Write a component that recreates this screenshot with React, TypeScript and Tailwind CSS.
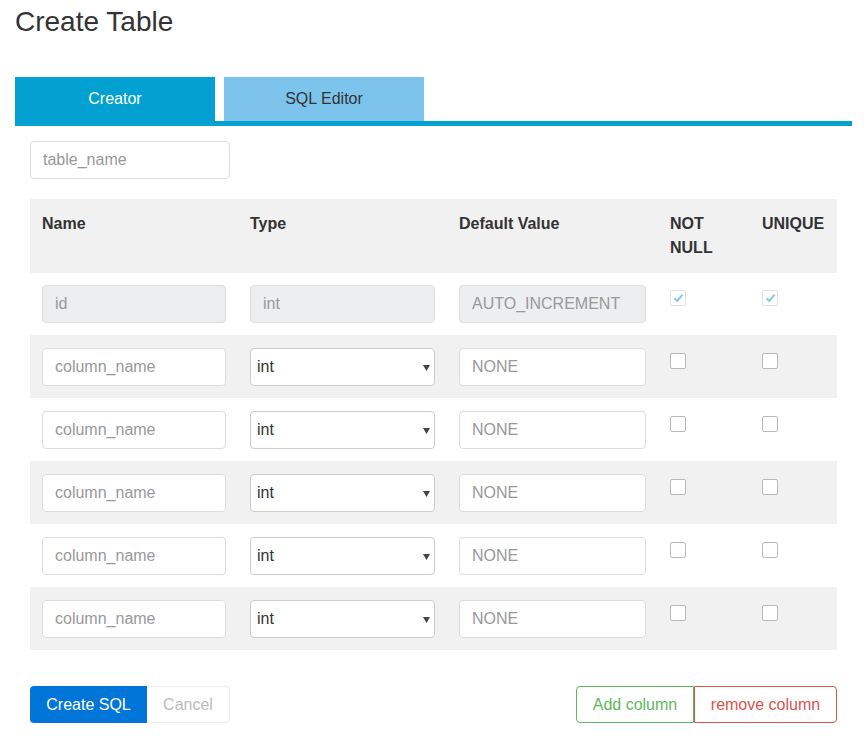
import React from "react";

function Check({ checked, disabled }: { checked?: boolean; disabled?: boolean }) {
  return (
    <div
      className={
        "w-4 h-4 rounded-[2px] bg-white flex items-center justify-center border " +
        (disabled ? "border-[#e2e2e2]" : "border-[#b8b8b8]")
      }
    >
      {checked && (
        <svg width="11" height="10" viewBox="0 0 11 10">
          <path d="M1.5 5.2 L4.2 7.8 L9.6 1.6" fill="none" stroke="#8ccbe8" strokeWidth="2.2" />
        </svg>
      )}
    </div>
  );
}

function Row({ gray }: { gray: boolean }) {
  return (
    <div className={"grid grid-cols-[208px_209px_211px_92px_87px] h-[63px] " + (gray ? "bg-[#f1f1f1]" : "bg-white")}>
      <div className="px-3 pt-[13px]">
        <input
          placeholder="column_name"
          className="w-full h-[38px] px-3 border border-[#ddd] rounded bg-white text-base text-[#333] placeholder:text-[#999] outline-none"
        />
      </div>
      <div className="px-3 pt-[13px]">
        <div className="relative w-full h-[38px] border border-[#ccc] rounded bg-white flex items-center pl-[6px] text-base text-[#333]">
          int
          <svg className="absolute right-[4px] top-[16px]" width="7" height="6" viewBox="0 0 7 6">
            <path d="M0 0 L7 0 L3.5 6 Z" fill="#444" />
          </svg>
        </div>
      </div>
      <div className="px-3 pt-[13px]">
        <input
          placeholder="NONE"
          className="w-full h-[38px] px-3 border border-[#ddd] rounded bg-white text-base text-[#333] placeholder:text-[#999] outline-none"
        />
      </div>
      <div className="px-3 pt-[18px]">
        <Check />
      </div>
      <div className="px-3 pt-[18px]">
        <Check />
      </div>
    </div>
  );
}

export default function App() {
  return (
    <div className="w-[868px] h-[745px] bg-white font-['Liberation_Sans',Arial,sans-serif] text-[#333] overflow-hidden">
      <h1 className="pl-[15px] pt-[5px] text-[28px] leading-[34px] font-normal text-[#333]">Create Table</h1>
      <div className="mt-[38px] ml-[15px] w-[837px]">
        <div className="flex gap-[9px] items-end">
          <div className="w-[200px] h-[44px] bg-[#02a1d2] text-white flex items-center justify-center text-base">Creator</div>
          <div className="w-[200px] h-[44px] bg-[#7dc4ec] text-[#333] flex items-center justify-center text-base">SQL Editor</div>
        </div>
        <div className="h-[5px] bg-[#02a1d2]" />
      </div>
      <div className="px-[30px]">
        <div className="pt-[15px]">
          <input
            placeholder="table_name"
            className="w-[200px] h-[38px] px-3 border border-[#ddd] rounded bg-white text-base placeholder:text-[#999] outline-none"
          />
        </div>
        <div className="mt-[20px] w-[807px]">
          <div className="grid grid-cols-[208px_209px_211px_92px_87px] h-[74px] bg-[#f1f1f1] font-bold text-base leading-6">
            <div className="px-3 pt-[13px]">Name</div>
            <div className="px-3 pt-[13px]">Type</div>
            <div className="px-3 pt-[13px]">Default Value</div>
            <div className="px-3 pt-[13px]">NOT<br />NULL</div>
            <div className="px-3 pt-[13px]">UNIQUE</div>
          </div>
          <div className="grid grid-cols-[208px_209px_211px_92px_87px] h-[62px] bg-white">
            <div className="px-3 pt-3">
              <div className="h-[38px] border border-[#ddd] rounded bg-[#eceeef] px-3 flex items-center text-base text-[#999]">id</div>
            </div>
            <div className="px-3 pt-3">
              <div className="h-[38px] border border-[#ddd] rounded bg-[#eceeef] px-3 flex items-center text-base text-[#999]">int</div>
            </div>
            <div className="px-3 pt-3">
              <div className="h-[38px] border border-[#ddd] rounded bg-[#eceeef] px-3 flex items-center text-base text-[#999]">AUTO_INCREMENT</div>
            </div>
            <div className="px-3 pt-[17px]">
              <Check checked disabled />
            </div>
            <div className="px-3 pt-[17px]">
              <Check checked disabled />
            </div>
          </div>
          <Row gray />
          <Row gray={false} />
          <Row gray />
          <Row gray={false} />
          <Row gray />
        </div>
        <div className="mt-[36px] flex justify-between w-[807px]">
          <div className="flex">
            <button className="h-[37px] w-[117px] bg-[#0275d8] text-white text-base rounded-l">Create SQL</button>
            <button className="h-[37px] w-[83px] bg-white text-[#bbb] text-base border border-[#eee] border-l-0 rounded-r">Cancel</button>
          </div>
          <div className="flex">
            <button className="h-[37px] w-[118px] bg-white text-[#5cb85c] text-base border border-[#5cb85c] rounded-l">Add column</button>
            <button className="h-[37px] w-[143px] bg-white text-[#d9534f] text-base border border-[#d9534f] rounded-r">remove column</button>
          </div>
        </div>
      </div>
    </div>
  );
}
